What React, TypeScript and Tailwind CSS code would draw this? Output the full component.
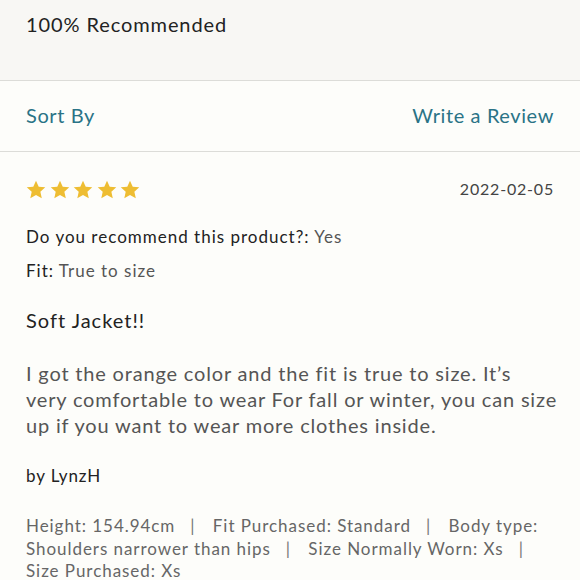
import React from "react";

const Star = () => (
  <svg width="20" height="19" viewBox="0 0 24 23" className="block">
    <path d="M12 0.8l3.3 7.3 7.9.8-5.9 5.4 1.7 7.8L12 18.1l-6.9 4 1.7-7.8L.8 8.9l7.9-.8z" fill="#eebd32" />
  </svg>
);

const Sep = () => <span className="ml-[15px] mr-[12px] text-[#777]">|</span>;

export default function App() {
  const font = { fontFamily: "Lato, 'Noto Sans', sans-serif" };
  return (
    <div className="w-[580px] h-[580px] overflow-hidden bg-[#fdfdfa]" style={font}>
      <div className="h-[81px] bg-[#f8f7f4] border-b border-[#dcdcd8] px-[26px] pt-[11px]">
        <div className="text-[20px] leading-[26px] tracking-[0.9px] text-[#222]">100% Recommended</div>
      </div>
      <div className="h-[71px] border-b border-[#dcdcd8] px-[26px] flex items-center justify-between">
        <span className="text-[20px] tracking-[0.6px] text-[#2a7386] -mt-[2px]">Sort By</span>
        <span className="text-[20px] tracking-[0.6px] text-[#2a7386] -mt-[2px]">Write a Review</span>
      </div>
      <div className="px-[26px]">
        <div className="flex justify-between items-center mt-[26px] h-[22px]">
          <div className="flex gap-[3.5px]">
            <Star />
            <Star />
            <Star />
            <Star />
            <Star />
          </div>
          <span className="text-[16px] leading-[22px] tracking-[0.8px] text-[#444]">2022-02-05</span>
        </div>
        <div className="mt-[26px] text-[17px] leading-[22px] tracking-[1px] text-[#222]">
          Do you recommend this product?: <span className="text-[#555]">Yes</span>
        </div>
        <div className="mt-[12px] text-[17px] leading-[22px] tracking-[1px] text-[#222]">
          Fit: <span className="text-[#555]">True to size</span>
        </div>
        <div className="mt-[25px] text-[20px] leading-[26px] tracking-[1px] text-[#222]">Soft Jacket!!</div>
        <p className="mt-[27px] mr-[-12px] text-[20px] leading-[26px] tracking-[0.82px] text-[#555]">
          I got the orange color and the fit is true to size. It’s
          <br />
          very comfortable to wear For fall or winter, you can size
          <br />
          up if you want to wear more clothes inside.
        </p>
        <div className="mt-[27px] text-[17px] leading-[22px] tracking-[0.9px] text-[#222]">by LynzH</div>
        <p className="mt-[28px] text-[17px] leading-[22.5px] tracking-[0.95px] text-[#666]">
          Height: 154.94cm<Sep /> Fit Purchased: Standard<Sep /> Body type: Shoulders narrower than hips<Sep /> Size Normally Worn: Xs<Sep /> Size Purchased: Xs
        </p>
      </div>
    </div>
  );
}
